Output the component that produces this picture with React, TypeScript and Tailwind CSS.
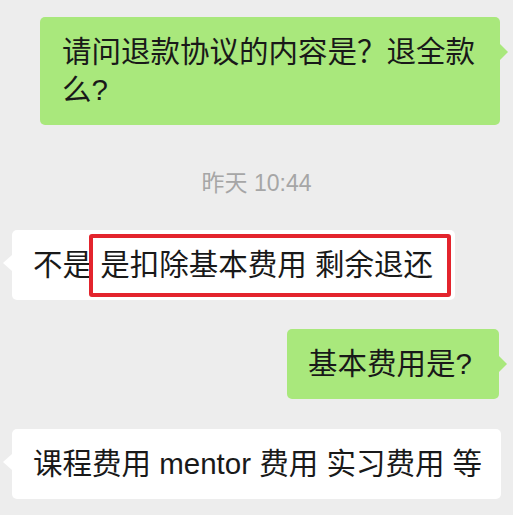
function OutTail() {
  return (
    <span className="absolute right-[-8px] top-[27px] h-0 w-0 border-y-[8px] border-l-[8px] border-y-transparent border-l-[#a9e87c]" />
  );
}

function InTail() {
  return (
    <span className="absolute left-[-9px] top-[25px] h-0 w-0 border-y-[8px] border-r-[9px] border-y-transparent border-r-white" />
  );
}

export default function App() {
  return (
    <div className="flex h-[515px] w-[513px] flex-col overflow-hidden bg-[#ededed] pt-[17px] font-[family-name:'Liberation_Sans','Noto_Sans_CJK_SC',sans-serif] text-[29.5px] leading-[38px] text-[#191919]">
      {/* outgoing */}
      <div className="flex justify-end pr-[13px]">
        <div className="relative w-[460px] rounded-[5px] bg-[#a9e87c] pb-[16px] pl-[22px] pr-[18px] pt-[16px]">
          请问退款协议的内容是？退全款么?
          <OutTail />
        </div>
      </div>

      {/* timestamp */}
      <div className="mt-[43px] h-[30px] text-center text-[23px] leading-[30px] text-[#a6a6a6]">
        昨天 10:44
      </div>

      {/* incoming, highlighted */}
      <div className="mt-[32px] flex pl-[12px]">
        <div className="relative w-[443px] whitespace-nowrap rounded-[5px] bg-white py-[16px] pl-[21px]">
          不是 是扣除基本费用 剩余退还
          <InTail />
          <div className="absolute left-[77px] top-[4px] h-[63px] w-[362px] rounded-[3px] border-[4.5px] border-[#e3242d]" />
        </div>
      </div>

      {/* outgoing */}
      <div className="mt-[29px] flex justify-end pr-[14px]">
        <div className="relative w-[212px] whitespace-nowrap rounded-[5px] bg-[#a9e87c] py-[16px] pl-[21px]">
          基本费用是?
          <OutTail />
        </div>
      </div>

      {/* incoming */}
      <div className="mt-[30px] flex pl-[12px]">
        <div className="relative w-[489px] whitespace-nowrap rounded-[5px] bg-white py-[16px] pl-[21px]">
          课程费用 mentor 费用 实习费用 等
          <InTail />
        </div>
      </div>
    </div>
  );
}
